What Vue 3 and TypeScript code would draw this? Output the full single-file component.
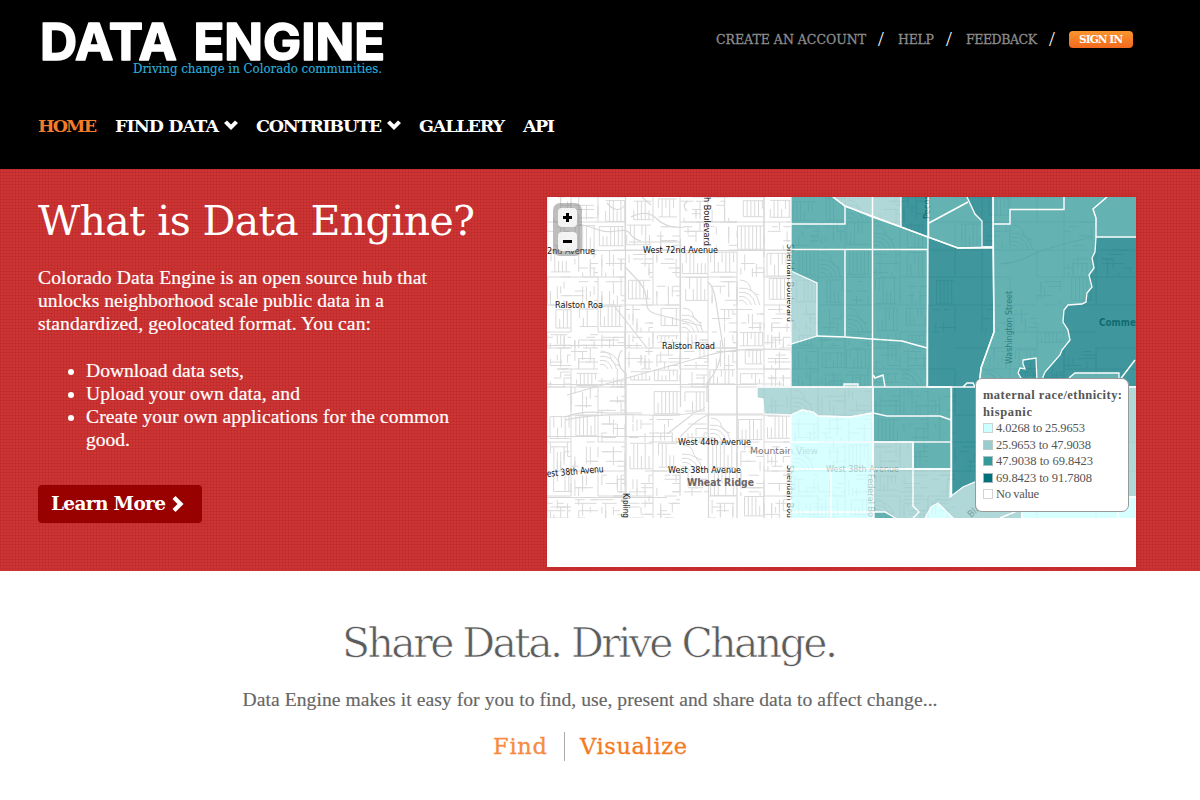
<script setup lang="ts">
interface NavItem { label: string; width: number; menu: boolean; active: boolean }
interface Label { t: string; x: number; y: number; w: number; r?: number; bold?: boolean; c?: string }

// Tracks a line of text so that it fills the given width in pixels.
const vFit = {
  mounted(el: HTMLElement, binding: { value: number }) {
    const count = (el.textContent ?? '').trim().length
    const natural = el.getBoundingClientRect().width
    el.style.letterSpacing = `${(binding.value - natural) / Math.max(1, count - 1)}px`
    el.style.width = `${binding.value}px`
  },
}

const nav: NavItem[] = [
  { label: 'HOME', width: 59, menu: false, active: true },
  { label: 'FIND DATA', width: 104, menu: true, active: false },
  { label: 'CONTRIBUTE', width: 126, menu: true, active: false },
  { label: 'GALLERY', width: 86, menu: false, active: false },
  { label: 'API', width: 32, menu: false, active: false },
]
const userLinks = [
  { label: 'CREATE AN ACCOUNT', width: 150 },
  { label: 'HELP', width: 36 },
  { label: 'FEEDBACK', width: 71 },
]
const intro = [
  { t: 'Colorado Data Engine is an open source hub that', w: 389 },
  { t: 'unlocks neighborhood scale public data in a', w: 346 },
  { t: 'standardized, geolocated format. You can:', w: 333 },
]
const features = [
  [{ t: 'Download data sets,', w: 158 }],
  [{ t: 'Upload your own data, and', w: 214 }],
  [{ t: 'Create your own applications for the common', w: 363 }, { t: 'good.', w: 44 }],
]
const legend = [
  { t: '4.0268 to 25.9653', w: 89, c: '#ccffff' },
  { t: '25.9653 to 47.9038', w: 95, c: '#99cccc' },
  { t: '47.9038 to 69.8423', w: 97, c: '#339999' },
  { t: '69.8423 to 91.7808', w: 96, c: '#00707a' },
  { t: 'No value', w: 43, c: '#ffffff' },
]

// Local street grid: arterials split the area into blocks, each block has its own pattern.
let seed = 72441
function rnd(): number {
  seed = (seed * 1103515245 + 12345) % 2147483648
  return seed / 2147483648
}
const xs = [0, 24, 51, 78, 106, 133, 161, 190, 217, 244, 271, 298, 325, 353, 381, 408, 435, 463, 490, 517, 549, 589]
const ys = [0, 25, 53, 80, 108, 135, 151, 172, 190, 218, 245, 274, 299, 321]
function buildStreets(): string {
  let d = ''
  for (let i = 0; i < xs.length - 1; i++) {
    for (let j = 0; j < ys.length - 1; j++) {
      const x0 = xs[i], y0 = ys[j], w = xs[i + 1] - x0, h = ys[j + 1] - y0
      if (x0 > 120 && x0 < 161 && y0 >= 299) continue
      const empty = (x0 > 370 && rnd() < 0.65) || (x0 < 217 && y0 === 190 && rnd() < 0.6)
      if (rnd() < 0.6) d += `M${x0} ${y0}h${w}`
      if (rnd() < 0.6) d += `M${x0} ${y0}v${h}`
      if (empty) continue
      const kind = rnd()
      if (kind < 0.32) {
        const a = x0 + rnd() * 9, b = x0 + w - rnd() * 3
        const t = y0 + rnd() * 5, u = y0 + h - rnd() * 7
        const m = (t + u) / 2
        d += `M${a.toFixed(1)} ${t.toFixed(1)}H${b.toFixed(1)}M${a.toFixed(1)} ${u.toFixed(1)}H${b.toFixed(1)}`
        for (let x = a; x <= b; x += 3.8) {
          d += `M${x.toFixed(1)} ${(rnd() < 0.2 ? m : t).toFixed(1)}V${(rnd() < 0.2 ? m : u).toFixed(1)}`
        }
      } else if (kind < 0.94) {
        for (let k = 0; k < 13; k++) {
          const x = x0 + Math.round(rnd() * 7) * w / 7, y = y0 + Math.round(rnd() * 6) * h / 6
          const l = 5 + rnd() * 14
          if (rnd() < 0.5) d += `M${x.toFixed(1)} ${y.toFixed(1)}h${Math.min(l, x0 + w - x).toFixed(1)}`
          else d += `M${x.toFixed(1)} ${y.toFixed(1)}v${Math.min(l, y0 + h - y).toFixed(1)}`
        }
      } else {
        for (let k = 1; k < 5; k++) {
          const r = k * 4.2
          d += `M${x0 + 2} ${y0 + h - r}q${r} -2 ${Math.min(r + 4, w - 2)} ${Math.min(r, h - 2)}`
        }
        d += `M${x0 + 3} ${y0 + 3}q9 1 10 7t9 8`
      }
    }
  }
  return d
}
const streets = buildStreets()

const arterials = [
  'M0 53.5H244', 'M0 187.5H210', 'M0 239.5H125', 'M78.500 0V240', 'M133.500 42V210', 'M161.500 185V321', 'M0 148.500H95',
  'M31 27C50 30 52 37 70 34S78 40 94 44', 'M78 70C98 90 99 92 100 109Q101 116 113 118L155 129',
  'M68 110L100 151', 'M161 85Q167 90 169 105L176 150', 'M20 198L80 181L162 158Q190 150 244 153',
  'M18 220Q35 213 60 216H95M18 223Q50 216 100 218T158 210M160 205V186Q174 170 174 153',
  'M120 237L146 217H217M133 240Q150 222 161 218', 'M75 153Q66 165 79 177V321', 'M0 300.500H120',
  'M217 0V60M190 90V321', 'M453 67Q470 66 485 58T546 40',
  'M84 20Q100 12 110 22T138 30M82 45H133M95 0L104 8M60 6Q70 18 78 8M140 14Q134 8 141 4',
]

const zones = [
  { c: '#359b9c', p: '244,-3 593,-3 593,325 244,325' },
  { c: '#99cccc', p: '286,0 298,9 325,20 354,30 354,-3 286,-3' },
  { c: '#03777f', p: '354,-3 354,30 381,40 381,-3' },
  { c: '#03777f', p: '420,-3 420,0 428,17 435,24 435,50 446,50 446,-3' },
  { c: '#03777f', p: '381,40 411,51 446,50 447,135 434,171 432,190 432,325 404,325 404,190 380,190' },
  { c: '#99cccc', p: '244,74 270,86 270,139 244,147' },
  { c: '#03777f', p: '549,40 593,40 593,190 496,190 496,180 498,175 513,158 515,153 523,143 521,133 516,125 517,113 521,108 535,107 539,105 540,96 545,90 542,78 547,71 545,61 548,55' },
  { c: '#03777f', p: '476,163 489,161 490,184 476,184 471,176 473,171 478,172 476,167' },
  { c: '#359b9c', p: '519,186 523,180 528,176 572,176 572,186' },
  { c: '#99cccc', p: '210,190 297,190 297,187 311,187 311,190 326,190 326,216 303,220 271,219 266,215 255,213 244,218 217,217 216,202 210,201' },
  { c: '#ccffff', p: '244,218 255,213 266,215 271,219 303,220 326,216 326,325 244,325' },
  { c: '#99cccc', p: '326,245 366,245 366,272 326,272' },
  { c: '#99cccc', p: '326,272 404,272 403,300 416,290 428,285 475,285 475,325 326,325' },
  { c: '#359b9c', p: '327,315 338,315 355,325 327,325' },
  { c: '#ccffff', p: '384,310 391,306 410,325 376,325' },
  { c: '#99cccc', p: '475,190 593,190 593,300 475,300' },
  { c: '#ccffff', p: '475,300 593,300 593,325 475,325' },
]
const borders = [
  'M244 27H298V9', 'M244 52.500H381', 'M298 53V140', 'M325.500 0V190', 'M380.500 53V190', 'M381.500 0V40',
  'M270 139L298 140L325 142L355 144L380 151', 'M382 26L421 5', 'M286 0L298 9L381 40L411 51H446',
  'M446 0L447 135L434 171L432 190', 'M446 27H463V12.500H517V0', 'M560 0L546 12L549 21V40', 'M588 163L572 184',
  'M210 190H433M416 190L420 186H426L428 190', 'M326 178L328 181L336 178L338 190', 'M326 216L340 219H393L404 223',
  'M404.500 190V300', 'M244 245H404M244 272H404M284 272V321M244 315H326M326 190V321', 'M366 245V309L372 315L366 321',
  'M453 321L475 312', 'M571 300V321',
]

const under: Label[] = [
  { t: 'Sheridan Boulevard', x: 240, y: 47, w: 78, r: 90 },
  { t: 'Sheridan Bou', x: 240, y: 268, w: 53, r: 90 },
  { t: 'Federal Bo', x: 321, y: 277, w: 43, r: 90 },
  { t: 'Mountain View', x: 203, y: 257, w: 68, c: '#777' },
  { t: 'West 38th Avenue', x: 279, y: 275, w: 73 },
  { t: 'Washington Street', x: 465, y: 167, w: 73, r: -90 },
  { t: 'Pecos', x: 383, y: 22, w: 24, r: -90 },
  { t: 'Comme', x: 552, y: 129, w: 37, bold: true, c: '#444' },
  { t: 'Bla', x: 424, y: 321, w: 14, r: -42 },
]
const over: Label[] = [
  { t: '2nd Avenue', x: 0, y: 56.500, w: 48 },
  { t: 'West 72nd Avenue', x: 96, y: 56, w: 75 },
  { t: 'Ralston Roa', x: 8, y: 111, w: 48 },
  { t: 'Ralston Road', x: 115, y: 151.500, w: 53 },
  { t: 'h Boulevard', x: 157, y: 0, w: 49, r: 90 },
  { t: 'West 44th Avenue', x: 131, y: 247.500, w: 73 },
  { t: 'West 38th Avenue', x: 121, y: 275.500, w: 73 },
  { t: 'est 38th Avenu', x: 0, y: 280, w: 57, r: -5 },
  { t: 'Kipling', x: 76, y: 296, w: 25, r: 90 },
  { t: 'Wheat Ridge', x: 140, y: 289, w: 67, bold: true, c: '#6b6668' },
]
function turn(l: Label): string {
  return `rotate(${l.r ?? 0} ${l.x} ${l.y})`
}
</script>

<template>
  <div class="page">
    <header class="header">
      <div class="top">
        <svg class="logo" width="360" height="84" viewBox="0 0 360 84">
          <text class="brand" y="59.500">
            <tspan x="2" textLength="137" lengthAdjust="spacingAndGlyphs">DATA</tspan>
            <tspan x="155.500" textLength="191.500" lengthAdjust="spacingAndGlyphs">ENGINE</tspan>
          </text>
          <text class="tagline" x="95" y="72.500" textLength="249" lengthAdjust="spacingAndGlyphs">Driving change in Colorado communities.</text>
        </svg>
        <div class="user">
          <template v-for="u in userLinks" :key="u.label">
            <a v-fit="u.width" class="user-link">{{ u.label }}</a>
            <span class="slash">/</span>
          </template>
          <a class="sign-in"><span v-fit="44" class="fit">SIGN IN</span></a>
        </div>
      </div>
      <nav class="nav">
        <a v-for="n in nav" :key="n.label" class="nav-item" :class="{ active: n.active }">
          <span v-fit="n.width" class="fit">{{ n.label }}</span>
          <svg v-if="n.menu" class="chev" width="14" height="11" viewBox="0 0 14 11">
            <path d="M0 3L3 0.500L7 4.500L11 0.500L14 3L7 10Z" fill="#fff" />
          </svg>
        </a>
      </nav>
    </header>

    <section class="hero">
      <div class="about">
        <h1><span v-fit="437" class="fit">What is Data Engine?</span></h1>
        <p class="intro">
          <span v-for="l in intro" :key="l.t" class="line"><span v-fit="l.w" class="fit">{{ l.t }}</span></span>
        </p>
        <ul class="features">
          <li v-for="(f, i) in features" :key="i">
            <span v-for="l in f" :key="l.t" class="line"><span v-fit="l.w" class="fit">{{ l.t }}</span></span>
          </li>
        </ul>
        <a class="learn">
          <span v-fit="115" class="fit">Learn More</span>
          <svg width="12" height="16" viewBox="0 0 12 16">
            <path d="M0.500 3L3.500 0L11.500 8L3.500 16L0.500 13L5.500 8Z" fill="#fff" />
          </svg>
        </a>
      </div>

      <div class="map">
        <svg width="589" height="321" viewBox="0 0 589 321">
          <rect width="589" height="321" fill="#fff" />
          <path :d="streets" fill="none" stroke="#dadada" stroke-width="1" />
          <path v-for="a in arterials" :key="a" :d="a" fill="none" stroke="#d8d8d8" stroke-width="1.2" />
          <g class="label">
            <text
              v-for="(l, i) in under" :key="i" :x="l.x" :y="l.y" :transform="turn(l)" :textLength="l.w"
              lengthAdjust="spacingAndGlyphs" :class="{ strong: l.bold }" :fill="l.c ?? '#111'"
            >{{ l.t }}</text>
          </g>
          <g opacity="0.76">
            <polygon v-for="z in zones" :key="z.p" :points="z.p" :fill="z.c" stroke="#fff" stroke-width="1.300" />
            <path v-for="b in borders" :key="b" :d="b" fill="none" stroke="#fff" stroke-width="1.500" />
          </g>
          <g class="label">
            <text
              v-for="(l, i) in over" :key="i" :x="l.x" :y="l.y" :transform="turn(l)" :textLength="l.w"
              lengthAdjust="spacingAndGlyphs" :class="{ strong: l.bold }" :fill="l.c ?? '#111'"
            >{{ l.t }}</text>
          </g>
        </svg>
        <div class="zoom">
          <span class="zoom-btn"><i class="bar" /><i class="bar upright" /></span>
          <span class="zoom-btn"><i class="bar" /></span>
        </div>
        <div class="legend">
          <strong v-fit="139" class="fit">maternal race/ethnicity:</strong>
          <strong v-fit="49" class="fit">hispanic</strong>
          <div v-for="l in legend" :key="l.t" class="entry">
            <i class="swatch" :style="{ backgroundColor: l.c }" />
            <span v-fit="l.w" class="fit">{{ l.t }}</span>
          </div>
        </div>
      </div>
    </section>

    <section class="share">
      <h2><span v-fit="496" class="fit">Share Data. Drive Change.</span></h2>
      <p><span v-fit="695" class="fit">Data Engine makes it easy for you to find, use, present and share data to affect change...</span></p>
      <div class="tabs">
        <a class="tab first"><span v-fit="54" class="fit">Find</span></a>
        <a class="tab"><span v-fit="107" class="fit">Visualize</span></a>
      </div>
    </section>
  </div>
</template>

<style>
body { margin: 0; background: #fff; overflow: hidden; }
</style>

<style scoped>
.page {
  width: 1200px;
  height: 800px;
  overflow: hidden;
  font-family: "Liberation Serif", serif;
  color: #666;
}
.fit, .user-link { display: inline-block; white-space: nowrap; }
h1, h2, p, ul { margin: 0; padding: 0; }

.header { height: 169px; background: #000; font-family: "DejaVu Serif", serif; }
.top { display: flex; justify-content: space-between; height: 114px; }
.logo { margin-left: 38px; }
.brand { font: 700 50.500px Inter, sans-serif; fill: #fff; stroke: #fff; stroke-width: 1.6px; stroke-linejoin: round; }
.tagline { font-size: 12px; fill: #2aaedb; stroke: #2aaedb; stroke-width: 0.15px; }
.user { display: flex; align-items: flex-start; padding: 31px 67px 0 0; }
.user-link { font-size: 12.500px; line-height: 17px; color: #8c8c8c; -webkit-text-stroke: 0.3px #8c8c8c; }
.slash { width: 30px; padding-right: 2px; text-align: center; color: #fff; font: 21px/16px "Liberation Serif", serif; }
.sign-in {
  display: flex;
  align-items: center;
  justify-content: center;
  box-sizing: border-box;
  width: 64px;
  height: 17px;
  padding-bottom: 2px;
  border-radius: 4px;
  background: linear-gradient(#f9962f, #f2691f);
  color: #fff;
  font-size: 10.500px;
  font-weight: 700;
}
.nav { display: flex; gap: 18px; padding-left: 38px; }
.nav-item { display: flex; align-items: center; gap: 5px; height: 24px; line-height: 24px; color: #fff; font-size: 17.500px; font-weight: 700; }
.nav-item.active { color: #f47b29; }
.chev { margin-bottom: 2px; }

.hero {
  display: flex;
  justify-content: space-between;
  box-sizing: border-box;
  height: 402px;
  padding: 28px 64px 0 38px;
  background-color: #cd3434;
  background-image:
    linear-gradient(rgba(150, 20, 20, 0.15) 1px, transparent 1px),
    linear-gradient(90deg, rgba(150, 20, 20, 0.15) 1px, transparent 1px);
  background-size: 3px 3px;
}
.about { color: #fff; }
h1, h2 { font: 400 41px/48px "DejaVu Serif", serif; }
.intro { margin-top: 21px; }
.line { display: block; height: 23px; font-size: 19.600px; line-height: 23px; -webkit-text-stroke: 0.2px #fff; }
.features { margin-top: 24px; padding-left: 48px; font-size: 19.600px; line-height: 23px; }
.learn {
  display: flex;
  align-items: center;
  gap: 6px;
  box-sizing: border-box;
  width: 164px;
  height: 38px;
  margin-top: 34px;
  padding: 0 0 1px 13px;
  border-radius: 4px;
  background: #990000;
  font: 700 18.500px/37px "DejaVu Serif", serif;
}

.map { position: relative; width: 589px; height: 370px; background: #fff; box-shadow: 0 0 4px #c02828; }
.map > svg { display: block; }
.label { font: 9.500px "DejaVu Sans", sans-serif; }
.strong { font-weight: 700; font-size: 10px; }
.zoom {
  position: absolute;
  top: 6px;
  left: 6px;
  display: flex;
  flex-direction: column;
  align-items: center;
  gap: 4px;
  box-sizing: border-box;
  width: 29px;
  height: 53px;
  padding-top: 5px;
  border-radius: 7px;
  background: rgba(110, 110, 110, 0.45);
}
.zoom-btn { position: relative; width: 19px; height: 19px; border-radius: 4px; background: rgba(250, 250, 250, 0.9); }
.zoom-btn + .zoom-btn { margin-top: 1px; }
.bar { position: absolute; left: 5px; top: 8px; width: 9px; height: 3px; background: #000; }
.upright { transform: rotate(90deg); }
.legend {
  position: absolute;
  top: 181px;
  left: 428px;
  box-sizing: border-box;
  width: 154px;
  height: 134px;
  padding: 8px 0 0 7px;
  border: 1px solid #999;
  border-radius: 7px;
  background: #fff;
  color: #555;
  font-size: 12.500px;
  line-height: 16.500px;
}
.legend strong { height: 16.500px; }
.entry { display: flex; align-items: center; gap: 3px; height: 16.500px; }
.swatch { box-sizing: border-box; width: 10px; height: 10px; border: 1px solid rgba(200, 200, 200, 0.8); }

.share { padding-top: 48px; display: flex; flex-direction: column; align-items: center; width: 1180px; }
.share h2 { color: #5c5c5c; -webkit-text-stroke: 0.7px #fff; }
.share p { margin-top: 21px; font-size: 19.600px; line-height: 23px; -webkit-text-stroke: 0.15px #666; }
.tabs { display: flex; margin-top: 21px; font-family: "DejaVu Serif", serif; }
.tab { height: 29px; color: #f47b20; font-size: 22.500px; line-height: 29px; -webkit-text-stroke: 0.3px currentColor; }
.first { padding-right: 17px; margin-right: 15px; border-right: 1px solid #aaa; color: #f68b42; }
</style>
